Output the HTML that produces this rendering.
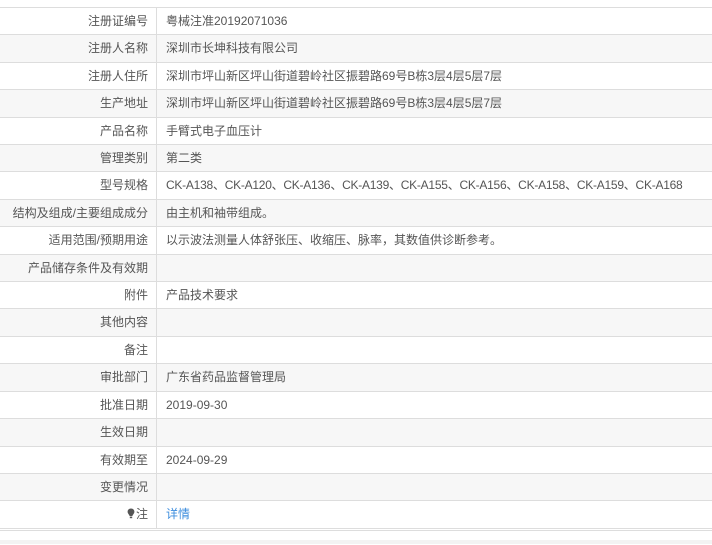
<!DOCTYPE html>
<html><head><meta charset="utf-8"><style>
html,body{margin:0;padding:0;width:712px;height:544px;overflow:hidden;background:#fff;}
body{font-family:"Liberation Sans","Noto Sans CJK SC",sans-serif;font-size:12px;color:#555;}
.t{position:absolute;left:0;top:7px;width:712px;border-top:1px solid #ddd;}
.r{display:flex;height:27.42px;box-sizing:border-box;border-bottom:1px solid #ddd;line-height:26px;}
.r:nth-child(even){background:#f7f7f7;}
.l{width:157px;box-sizing:border-box;border-right:1px solid #ddd;text-align:right;padding-right:8px;white-space:nowrap;}
.v{padding-left:9px;white-space:nowrap;}
a{color:#3c8dde;text-decoration:none;}
.bot{position:absolute;left:0;top:530px;width:712px;height:14px;border-top:1px solid #ddd;background:#fff;}
.bot2{position:absolute;left:0;top:540px;width:712px;height:4px;background:#f3f3f3;}
</style></head><body>
<div class="t">
<div class="r"><div class="l">注册证编号</div><div class="v">粤械注准20192071036</div></div>
<div class="r"><div class="l">注册人名称</div><div class="v">深圳市长坤科技有限公司</div></div>
<div class="r"><div class="l">注册人住所</div><div class="v">深圳市坪山新区坪山街道碧岭社区振碧路69号B栋3层4层5层7层</div></div>
<div class="r"><div class="l">生产地址</div><div class="v">深圳市坪山新区坪山街道碧岭社区振碧路69号B栋3层4层5层7层</div></div>
<div class="r"><div class="l">产品名称</div><div class="v">手臂式电子血压计</div></div>
<div class="r"><div class="l">管理类别</div><div class="v">第二类</div></div>
<div class="r"><div class="l">型号规格</div><div class="v" style="letter-spacing:-0.25px">CK-A138、CK-A120、CK-A136、CK-A139、CK-A155、CK-A156、CK-A158、CK-A159、CK-A168</div></div>
<div class="r"><div class="l">结构及组成/主要组成成分</div><div class="v">由主机和袖带组成。</div></div>
<div class="r"><div class="l">适用范围/预期用途</div><div class="v">以示波法测量人体舒张压、收缩压、脉率，其数值供诊断参考。</div></div>
<div class="r"><div class="l">产品储存条件及有效期</div><div class="v"></div></div>
<div class="r"><div class="l">附件</div><div class="v">产品技术要求</div></div>
<div class="r"><div class="l">其他内容</div><div class="v"></div></div>
<div class="r"><div class="l">备注</div><div class="v"></div></div>
<div class="r"><div class="l">审批部门</div><div class="v">广东省药品监督管理局</div></div>
<div class="r"><div class="l">批准日期</div><div class="v">2019-09-30</div></div>
<div class="r"><div class="l">生效日期</div><div class="v"></div></div>
<div class="r"><div class="l">有效期至</div><div class="v">2024-09-29</div></div>
<div class="r"><div class="l">变更情况</div><div class="v"></div></div>
<div class="r"><div class="l"><svg width="8" height="11" viewBox="0 0 8 11" style="vertical-align:-1px;margin-right:1px"><path d="M4 0.5C1.8 0.5 0.6 2 0.6 3.8C0.6 5.5 2 6.5 2.6 8L5.4 8C6 6.5 7.4 5.5 7.4 3.8C7.4 2 6.2 0.5 4 0.5Z" fill="#555"/><rect x="2.8" y="8.6" width="2.4" height="1.6" fill="#555"/></svg>注</div><div class="v"><a>详情</a></div></div>
</div>
<div class="bot"></div><div class="bot2"></div>
</body></html>
